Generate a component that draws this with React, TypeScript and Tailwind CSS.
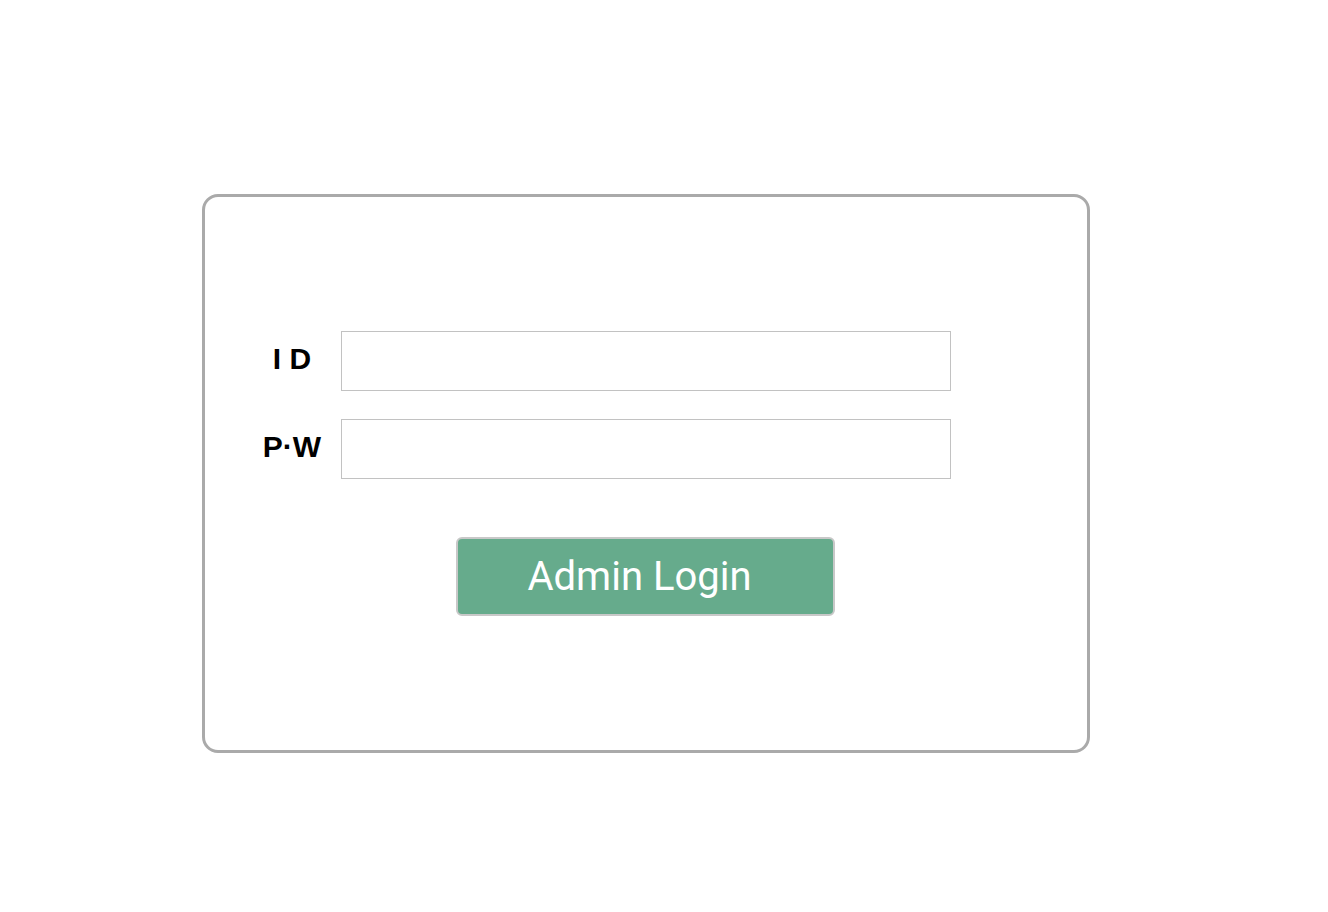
export default function App() {
  return (
    <div className="min-h-[912px] w-full bg-white pt-[194px] pl-[202px] font-['Roboto',sans-serif]">
      <div className="flex h-[559px] w-[888px] flex-col items-center justify-center rounded-[16px] border-[3px] border-[#aaaaaa]">
        <div className="mr-[98px] flex flex-col gap-[28px]">
          <div className="flex items-center">
            <label className="w-[98px] pb-[5px] text-center font-['Liberation_Sans',sans-serif] text-[30px] font-bold leading-none text-black">I D</label>
            <input type="text" className="h-[60px] w-[610px] border border-[#c2c2c2] bg-white px-3 text-xl outline-none" />
          </div>
          <div className="flex items-center">
            <label className="w-[98px] pb-[5px] text-center font-['Liberation_Sans',sans-serif] text-[30px] font-bold leading-none text-black">P·W</label>
            <input type="password" className="h-[60px] w-[610px] border border-[#c2c2c2] bg-white px-3 text-xl outline-none" />
          </div>
        </div>
        <button className="mr-[2px] mt-[58px] h-[79px] w-[379px] rounded-[6px] border-2 border-[#c8c8c8] bg-[#66ab8c] pr-[11px] text-[40px] leading-none text-white">
          Admin Login
        </button>
      </div>
    </div>
  )
}
